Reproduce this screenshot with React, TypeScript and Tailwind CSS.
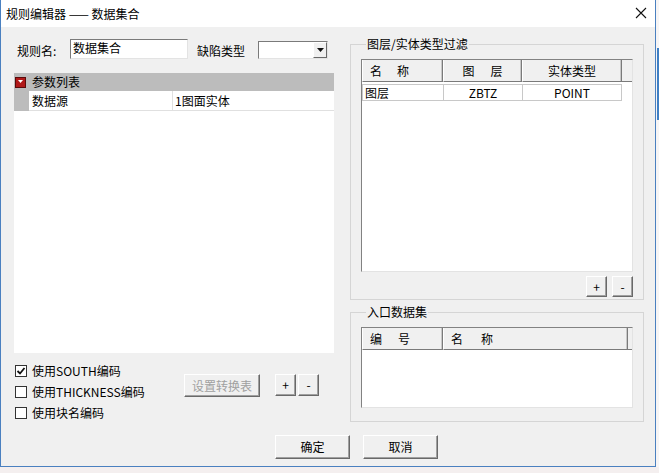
import React from "react";

const FONT = "font-['Noto_Sans_CJK_SC','Microsoft_YaHei','Liberation_Sans',sans-serif]";

function Btn({
  children,
  className = "",
  disabled = false,
}: {
  children: React.ReactNode;
  className?: string;
  disabled?: boolean;
}) {
  return (
    <div
      className={`flex items-center justify-center border border-t-white border-l-white border-r-[#696969] border-b-[#696969] bg-[#f0f0f0] shadow-[inset_-1px_-1px_#a0a0a0] text-[12px] leading-none ${
        disabled ? "text-[#a0a0a0]" : "text-black"
      } ${className}`}
    >
      {children}
    </div>
  );
}

function Check({ checked, label }: { checked?: boolean; label: string }) {
  return (
    <div className="flex h-[21px] items-center">
      <div className="ml-[1px] flex h-[12px] w-[12px] items-center justify-center border border-[#333] bg-white">
        {checked && (
          <svg width="10" height="10" viewBox="0 0 10 10">
            <path d="M1.5 5 L4 7.5 L8.5 2" fill="none" stroke="#111" strokeWidth="1.8" />
          </svg>
        )}
      </div>
      <span className="ml-[5px] text-[12px] leading-none">{label}</span>
    </div>
  );
}

function HeaderCell({
  w,
  children,
  align = "center",
}: {
  w: string;
  children?: React.ReactNode;
  align?: "center" | "left";
}) {
  return (
    <div
      className={`flex h-full items-center border-r border-b border-r-[#7a7a7a] border-b-[#7a7a7a] border-l border-l-white shadow-[inset_-1px_0_#c8c8c8] ${w} ${
        align === "center" ? "justify-center" : "pl-[7px]"
      }`}
    >
      {children}
    </div>
  );
}

function Spaced({ a, b, gap }: { a: string; b: string; gap: string }) {
  return (
    <span className={`flex ${gap}`}>
      <span>{a}</span>
      <span>{b}</span>
    </span>
  );
}

export default function App() {
  return (
    <div className={`flex h-[473px] w-[659px] flex-col overflow-hidden bg-[#f4efef] text-black ${FONT}`}>
      <div className="flex">
        {/* dialog window */}
        <div className="flex h-[467px] w-[656px] flex-col border-x border-b border-[#4a80c0]">
          {/* title bar */}
          <div className="flex h-[27px] items-center justify-between bg-white pl-[5px] pr-[8px]">
            <span className="text-[12px] leading-none">规则编辑器 —— 数据集合</span>
            <svg width="12" height="12" viewBox="0 0 12 12" className="mb-[1px]">
              <path d="M1 1 L11 11 M11 1 L1 11" stroke="#111" strokeWidth="1.1" />
            </svg>
          </div>

          {/* body */}
          <div className="flex flex-1 flex-col bg-[#f0f0f0]">
            <div className="flex items-start">
              {/* left column */}
              <div className="ml-[13px] flex w-[320px] flex-col pt-[12px]">
                <div className="flex h-[20px] items-start">
                  <span className="ml-[3px] mt-[6px] w-[53px] text-[12px] leading-none">规则名:</span>
                  <div className="flex h-[20px] w-[118px] border border-t-[#7a7a7a] border-l-[#7a7a7a] border-r-[#e3e3e3] border-b-[#e3e3e3] bg-white pl-[2px] pt-[2px] text-[12px] leading-none">
                    数据集合
                  </div>
                  <span className="ml-[9px] mt-[6px] text-[12px] leading-none">缺陷类型</span>
                  <div className="ml-[13px] mt-[2px] flex h-[18px] w-[70px] border border-t-[#7a7a7a] border-l-[#7a7a7a] border-r-[#e3e3e3] border-b-[#e3e3e3] bg-white">
                    <div className="flex-1" />
                    <div className="flex w-[14px] items-center justify-center border border-t-white border-l-white border-r-[#696969] border-b-[#696969] bg-[#f0f0f0]">
                      <svg width="7" height="4" viewBox="0 0 7 4">
                        <path d="M0 0 H7 L3.5 4 Z" fill="#111" />
                      </svg>
                    </div>
                  </div>
                </div>

                {/* property grid */}
                <div className="mt-[14px] flex h-[280px] flex-col bg-white">
                  <div className="flex h-[18px] items-center bg-[#bcbcbc]">
                    <div className="ml-[2px] flex h-[9px] w-[9px] items-start justify-center bg-[#b01818] pt-[2px] ring-1 ring-[#5a0a0a]">
                      <svg width="5" height="3" viewBox="0 0 5 3">
                        <path d="M0 0 H5 L2.5 3 Z" fill="#fff" />
                      </svg>
                    </div>
                    <span className="ml-[7px] text-[12px] leading-none">参数列表</span>
                  </div>
                  <div className="flex h-[20px]">
                    <div className="w-[15px] bg-[#bcbcbc]" />
                    <div className="flex w-[144px] items-center border-r border-b border-[#e0e0e0] pl-[3px] text-[12px] leading-none">
                      数据源
                    </div>
                    <div className="flex flex-1 items-center border-b border-[#e0e0e0] pl-[2px] text-[12px] leading-none">
                      1图面实体
                    </div>
                  </div>
                </div>

                {/* options */}
                <div className="mt-[7px] flex items-start">
                  <div className="flex w-[170px] flex-col">
                    <Check checked label="使用SOUTH编码" />
                    <Check label="使用THICKNESS编码" />
                    <Check label="使用块名编码" />
                  </div>
                  <div className="mt-[14px] flex">
                    <Btn disabled className="h-[23px] w-[76px]">
                      设置转换表
                    </Btn>
                    <Btn className="ml-[15px] h-[22px] w-[21px]">+</Btn>
                    <Btn className="ml-[2px] h-[22px] w-[21px]">-</Btn>
                  </div>
                </div>
              </div>

              {/* right column */}
              <div className="ml-[16px] flex w-[294px] flex-col pt-[10px]">
                <fieldset className="border border-[#d5d5d5] px-[10px] pb-[2px]">
                  <legend className="ml-[5px] px-[1px] text-[12px] leading-[14px]">图层/实体类型过滤</legend>
                  <div className="mt-[8px] flex h-[213px] flex-col border border-t-[#828282] border-l-[#828282] border-r-[#e3e3e3] border-b-[#e3e3e3] bg-white">
                    <div className="flex h-[22px] bg-[#f0f0f0] text-[12px] leading-none">
                      <HeaderCell w="w-[81px]" align="left">
                        <Spaced a="名" b="称" gap="gap-[15px]" />
                      </HeaderCell>
                      <HeaderCell w="w-[79px]">
                        <Spaced a="图" b="层" gap="gap-[16px]" />
                      </HeaderCell>
                      <HeaderCell w="w-[100px]">实体类型</HeaderCell>
                      <div className="flex-1 border-b border-[#7a7a7a]" />
                    </div>
                    <div className="mt-[2px] flex h-[17px] w-[260px] border border-[#c8c8c8] text-[12px] leading-none">
                      <div className="flex w-[81px] items-center border-r border-[#c8c8c8] pl-[2px]">图层</div>
                      <div className="flex w-[79px] items-center justify-center border-r border-[#c8c8c8]">ZBTZ</div>
                      <div className="flex flex-1 items-center justify-center">POINT</div>
                    </div>
                  </div>
                  <div className="mt-[4px] flex justify-end">
                    <Btn className="h-[21px] w-[21px]">+</Btn>
                    <Btn className="ml-[5px] h-[21px] w-[21px]">-</Btn>
                  </div>
                </fieldset>

                <fieldset className="mt-[5px] border border-[#d5d5d5] px-[10px] pb-[13px]">
                  <legend className="ml-[5px] px-[1px] text-[12px] leading-[14px]">入口数据集</legend>
                  <div className="mt-[8px] flex h-[81px] flex-col border border-t-[#828282] border-l-[#828282] border-r-[#e3e3e3] border-b-[#e3e3e3] bg-white">
                    <div className="flex h-[22px] bg-[#f0f0f0] text-[12px] leading-none">
                      <HeaderCell w="w-[81px]" align="left">
                        <Spaced a="编" b="号" gap="gap-[16px]" />
                      </HeaderCell>
                      <HeaderCell w="w-[185px]" align="left">
                        <Spaced a="名" b="称" gap="gap-[18px]" />
                      </HeaderCell>
                      <div className="flex-1 border-b border-[#7a7a7a]" />
                    </div>
                  </div>
                </fieldset>
              </div>
            </div>

            {/* dialog buttons */}
            <div className="mt-[12px] flex pl-[274px]">
              <Btn className="h-[24px] w-[75px]">确定</Btn>
              <Btn className="ml-[13px] h-[24px] w-[75px]">取消</Btn>
            </div>
          </div>
        </div>

        {/* desktop strip on the right */}
        <div className="flex flex-1 bg-[#f7f5f5] pl-[1px] pt-[48px]">
          <div className="h-[72px] w-[2px] bg-[#3f7fc4]" />
        </div>
      </div>
    </div>
  );
}
